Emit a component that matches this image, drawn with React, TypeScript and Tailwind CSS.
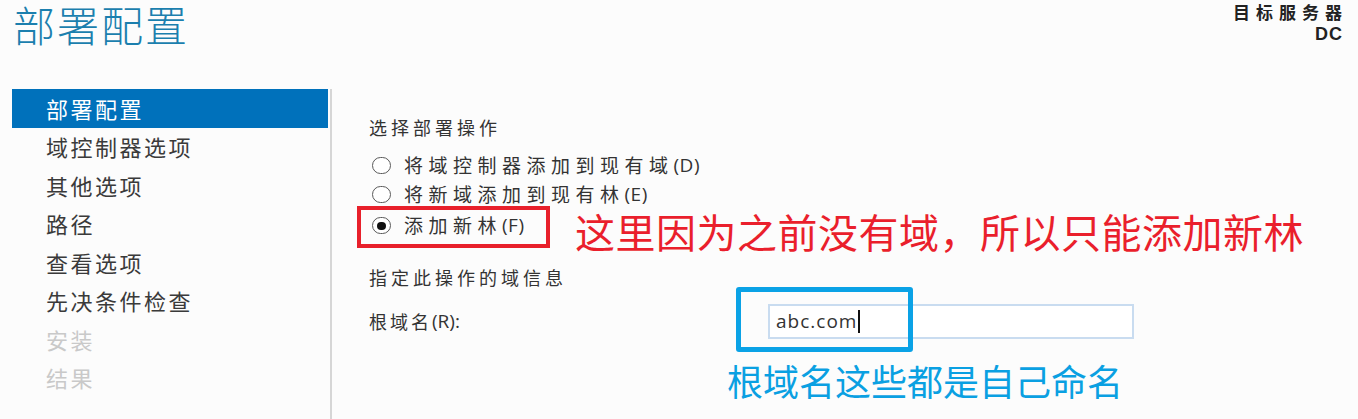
const navItems = [
  { label: "部署配置", state: "active" },
  { label: "域控制器选项", state: "normal" },
  { label: "其他选项", state: "normal" },
  { label: "路径", state: "normal" },
  { label: "查看选项", state: "normal" },
  { label: "先决条件检查", state: "normal" },
  { label: "安装", state: "disabled" },
  { label: "结果", state: "disabled" },
];

function Radio({ checked }: { checked?: boolean }) {
  return (
    <span className="flex items-center justify-center w-[19px] h-[17px] rounded-full border-[1.5px] border-[#5a5a5a] bg-white">
      {checked && <span className="w-[9px] h-[8px] rounded-full bg-[#111]" />}
    </span>
  );
}

// CJK part is spaced out, the latin key hint is not
function Label({ text, hint }: { text: string; hint: string }) {
  return (
    <span className="flex items-center">
      <span className="text-[19px] tracking-[5.5px]">{text}</span>
      <span className="font-['Open_Sans',sans-serif] text-[19px] tracking-[0.5px]">{hint}</span>
    </span>
  );
}

function App() {
  return (
    <div className="w-[1358px] h-[419px] overflow-hidden bg-[#fcfcfc] font-['Noto_Sans_CJK_SC','Noto_Sans',sans-serif] text-[#333]">
      <div className="flex justify-between items-start h-[89px]">
        <h1 className="pl-[13px] pt-[1px] text-[42px] leading-[46px] font-light tracking-[2px] text-[#1b7fae]">
          部署配置
        </h1>
        <div className="pr-[16px] pt-[1px] text-right text-[17px] font-bold leading-[22px] text-[#222]">
          <div className="tracking-[6px] -mr-[6px]">目标服务器</div>
          <div className="tracking-[1px] -mr-[1px] font-['Liberation_Sans',sans-serif] text-[18px]">DC</div>
        </div>
      </div>

      <div className="flex">
        <nav className="w-[332px] h-[330px] pl-[12px] border-r-2 border-[#d6d6d6]">
          {navItems.map((item) => (
            <div
              key={item.label}
              className={
                "flex items-center h-[38.5px] pl-[34px] text-[22px] tracking-[2.5px] " +
                (item.state === "active"
                  ? "w-[316px] bg-[#0071bb] text-white"
                  : item.state === "disabled"
                  ? "text-[#c9c9c9]"
                  : "text-[#3a3a3a]")
              }
            >
              {item.label}
            </div>
          ))}
        </nav>

        <div className="flex flex-col pl-[37px] text-[18px]">
          <div className="mt-[27px] h-[22px] leading-[22px] tracking-[4px]">选择部署操作</div>

          <div className="mt-[13px] flex items-center h-[28px] pl-[3px] gap-[13px]">
            <Radio />
            <Label text="将域控制器添加到现有域" hint="(D)" />
          </div>
          <div className="flex items-center h-[30px] pl-[3px] gap-[13px]">
            <Radio />
            <Label text="将新域添加到现有林" hint="(E)" />
          </div>
          <div className="-mt-[3px] -ml-[12px] flex items-start">
            <div className="flex items-center gap-[13px] w-[193px] h-[42px] pl-[11px] pb-[3px] border-[4px] border-[#e8202b]">
              <Radio checked />
              <Label text="添加新林" hint="(F)" />
            </div>
            <span className="ml-[25px] mt-[5px] -mb-[10px] text-[40px] leading-[40px] tracking-[0.5px] text-[#ea1f2c]">
              这里因为之前没有域，所以只能添加新林
            </span>
          </div>

          <div className="mt-[18px] h-[22px] leading-[22px] tracking-[4px]">指定此操作的域信息</div>

          <div className="mt-[16px] flex items-center">
            <span className="w-[399px] flex items-center">
              <span className="tracking-[3px]">根域名</span>
              <span className="font-['Open_Sans',sans-serif] text-[19px]">(R):</span>
            </span>
            <div className="relative">
              <div className="flex items-center w-[366px] h-[35px] pl-[6px] border-2 border-[#c9dcf0] bg-white">
                <span className="font-['Open_Sans',sans-serif] text-[19px] tracking-[1px] text-[#333]">abc.com</span>
                <span className="ml-[1px] w-[1.5px] h-[23px] bg-[#111]" />
              </div>
              <div className="absolute -left-[32px] -top-[17px] w-[177px] h-[65px] border-[5px] border-[#0aa2e6] rounded-[3px]" />
            </div>
          </div>

          <div className="mt-[21px] ml-[358px] text-[36px] leading-[40px] text-[#0aa0e2]">
            根域名这些都是自己命名
          </div>
        </div>
      </div>
    </div>
  );
}

export default App;
